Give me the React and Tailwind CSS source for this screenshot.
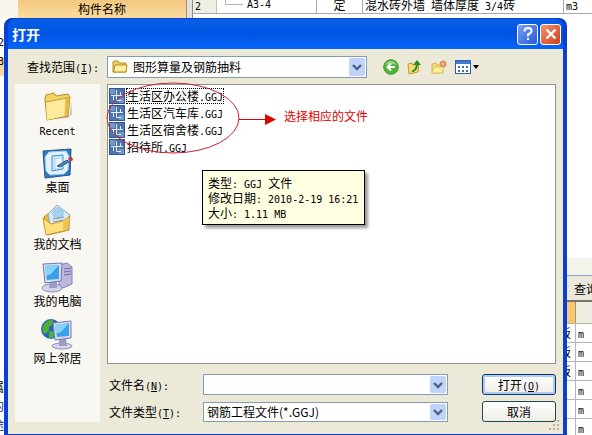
import { useState } from "react";

const places = [
  { name: "Recent", icon: RecentIcon },
  { name: "桌面", icon: DesktopIcon },
  { name: "我的文档", icon: DocumentsIcon },
  { name: "我的电脑", icon: ComputerIcon },
  { name: "网上邻居", icon: NetworkIcon },
];

const files = ["生活区办公楼.GGJ", "生活区汽车库.GGJ", "生活区宿舍楼.GGJ", "招待所.GGJ"];

const units = [
  { part: "板", unit: "m" },
  { part: "板", unit: "m" },
  { part: "板", unit: "m" },
  { part: "", unit: "m" },
  { part: "", unit: "m" },
  { part: "", unit: "m" },
];

// Latin runs are half as wide as the Chinese characters around them.
function Mixed({ text }) {
  return text.split(/([\x20-\x7e]+)/).map((run, index) =>
    index % 2 ? (
      <span key={index} className="whitespace-pre font-['DejaVu_Sans_Mono',monospace] text-[10px] leading-none">
        {run}
      </span>
    ) : (
      run
    ),
  );
}

function Accelerator({ letter }) {
  return (
    <span className="font-['DejaVu_Sans_Mono',monospace] text-[10px] leading-none">
      (<u>{letter}</u>)
    </span>
  );
}

function RecentIcon() {
  return (
    <svg viewBox="0 0 32 32" className="size-8" aria-hidden="true">
      <path d="M8 29 L28 25 L29 10 L30 24 L26 28 Z" fill="#8f8b78" opacity="0.5" />
      <path d="M3 9 L4 5 L12 3 L14 6 L26 4 L28 7 L26 26 L5 30 Z" fill="#f4d264" stroke="#b58b25" />
      <path d="M4 12 L23 8 L22 26 L5 30 Z" fill="#fdeb9b" />
      <path d="M3 12 L23 8.500 L28 7" fill="none" stroke="#c79c31" />
      <path d="M24 9 L28 7 L26 25 L23 26 Z" fill="#e3b743" />
    </svg>
  );
}

function DesktopIcon() {
  return (
    <svg viewBox="0 0 32 32" className="size-8" aria-hidden="true">
      <path d="M1 4 L29 2 L28 28 L3 31 Z" fill="#2f78bd" stroke="#1c5795" />
      <path d="M7 5 L24 4 L27 9 L26 23 L22 27 L8 28 L4 24 L3 10 Z" fill="#e3f2fc" stroke="#9cccee" />
      <path d="M10 9 L21 8 L21 22 L10 24 Z" fill="#c9e7fa" stroke="#468fc8" />
      <path d="M13 12 L20 11 L20 21 L13 22 Z" fill="#eef9ff" stroke="#b5d8ee" />
      <path d="M15 19 L25 13 L27 15 L18 20 Z" fill="#4f86b4" stroke="#2c5f90" />
      <path d="M26 11 L30 10 L31 13 L28 15 Z" fill="#c23a32" />
    </svg>
  );
}

function DocumentsIcon() {
  return (
    <svg viewBox="0 0 32 32" className="size-8" aria-hidden="true">
      <path d="M3 13 L8 9 L28 10 L28 26 L7 31 Z" fill="#e8b93c" stroke="#b58b25" />
      <path d="M7 10 L16 1 L29 11 L22 23 L10 24 Z" fill="#d9eaf5" stroke="#8fa8b8" />
      <circle cx="17" cy="9" r="6" fill="#a6d1ec" />
      <path d="M12 15 L23 13 M12 18 L22 16" stroke="#7d9db4" />
      <path d="M2 14 L10 20 L22 17 L29 12 L27 26 L5 31 Z" fill="#fbe07c" stroke="#c79c31" />
      <path d="M22 18 L28 14 L26 25 L22 27 Z" fill="#edc451" />
    </svg>
  );
}

function ComputerIcon() {
  return (
    <svg viewBox="0 0 32 32" className="size-8" aria-hidden="true">
      <path d="M18 4 L26 2 L31 6 L31 23 L22 27 L18 24 Z" fill="#b9b7dc" stroke="#8482b4" />
      <path d="M23 8 L30 7 M23 11 L30 10 M23 14 L30 13" stroke="#6d6aa5" />
      <ellipse cx="11" cy="27" rx="10" ry="4" fill="#d3d4e8" stroke="#8d8fb8" />
      <path d="M9 19 L16 19 L16 27 L8 27 Z" fill="#9c9dc6" />
      <path d="M2 3 L21 2 L20 20 L4 22 Z" fill="#d7dcef" stroke="#7579a9" />
      <path d="M4 5 L18 4 L18 18 L6 19 Z" fill="#3aa0ea" />
      <path d="M4 5 L18 4 L10 13 L5 15 Z" fill="#87d3fa" />
    </svg>
  );
}

function NetworkIcon() {
  return (
    <svg viewBox="0 0 32 32" className="size-8" aria-hidden="true">
      <circle cx="10" cy="11" r="10" fill="#2465c4" />
      <path d="M2 8 Q5 1 12 2 Q13 7 8 9 Q9 14 4 16 Q0 13 2 8 Z M8 13 L14 14 L12 20 L8 20 Z" fill="#4dae39" />
      <ellipse cx="21" cy="28" rx="10" ry="3" fill="#d3d4e8" stroke="#8d8fb8" />
      <path d="M18 20 L25 20 L26 28 L18 28 Z" fill="#9c9dc6" />
      <path d="M12 5 L30 3 L30 20 L14 22 Z" fill="#d7dcef" stroke="#7579a9" />
      <path d="M14 7 L28 5 L28 18 L16 19 Z" fill="#3aa0ea" />
      <path d="M14 7 L28 5 L20 14 L15 16 Z" fill="#87d3fa" />
    </svg>
  );
}

function SmallFolder() {
  return (
    <svg viewBox="0 0 16 16" className="size-4" aria-hidden="true">
      <path d="M1 13 V3 L2 2 H6 L7 4 H14 V13 Z" fill="#f3cf5c" stroke="#b58b25" />
      <path d="M1.500 13 L3 6 H15 L14 13 Z" fill="#fff0a0" stroke="#b58b25" />
    </svg>
  );
}

function FileIcon() {
  return (
    <svg viewBox="0 0 16 16" className="size-4 shrink-0" aria-hidden="true">
      <rect width="16" height="16" fill="#34568f" />
      <rect x="1" y="1" width="14" height="14" fill="#4c74b0" />
      <path d="M1 1 H6 V6 H1 Z M10 10 H15 V15 H10 Z" fill="#7398c8" />
      <path d="M7.500 2 V12.500 H12 M2 7.500 H14 M11.500 4 V7 M4.500 8 V12" fill="none" stroke="#e3ecf8" />
    </svg>
  );
}

function Chevron() {
  return (
    <span className="pointer-events-none flex h-full w-4 items-center justify-center rounded-xs bg-[#c1d3fb]">
      <svg viewBox="0 0 10 8" className="h-2 w-2.5" aria-hidden="true">
        <path d="M1 2 L5 6 L9 2" fill="none" stroke="#4d6185" strokeWidth="2.4" />
      </svg>
    </span>
  );
}

function Toolbar() {
  return (
    <div className="flex items-center gap-2 pl-4">
      <button type="button" aria-label="后退">
        <svg viewBox="0 0 16 16" className="size-4">
          <circle cx="8" cy="8" r="7.300" fill="#4fb338" stroke="#3a9a2a" />
          <path d="M2 6 Q4 2 8 2 Q12 2 14 6 Q8 4 2 6" fill="#93d67c" />
          <path d="M12 8 H5 M8 4.500 L4.500 8 L8 11.500" fill="none" stroke="#fff" strokeWidth="2" />
        </svg>
      </button>
      <button type="button" aria-label="向上一级">
        <svg viewBox="0 0 16 16" className="size-4">
          <path d="M1 5 L5 4 L6 6 L12 5 L11 13 L2 15 Z" fill="#f6dc73" stroke="#c39c37" />
          <path d="M5 12.500 Q10 11 10 5" fill="none" stroke="#2f8b26" strokeWidth="2" />
          <path d="M6 6 L10 1 L14 6 Z" fill="#2f8b26" />
        </svg>
      </button>
      <button type="button" aria-label="新建文件夹">
        <svg viewBox="0 0 16 16" className="size-4">
          <path d="M1 14 V5 L5 4 L6 6 H12 V14 Z" fill="#f6dc73" stroke="#d9b65c" />
          <path d="M1 14 L3 8 H13 L11 14 Z" fill="#fff0a0" stroke="#e0c068" />
          <circle cx="12" cy="5" r="3.500" fill="#e39a62" />
          <path d="M12 3 V7 M10 5 H14" stroke="#c9683a" />
          <circle cx="12" cy="5" r="1" fill="#fff" />
        </svg>
      </button>
      <button type="button" aria-label="查看菜单" className="flex items-center gap-0.5">
        <svg viewBox="0 0 16 16" className="size-4">
          <rect x="0.500" y="1.500" width="15" height="13" fill="#fff" stroke="#2d62a9" />
          <rect x="1" y="2" width="14" height="3" fill="#3d7cd0" />
          <path d="M3 7 H5 V9 H3 Z M7 7 H9 V9 H7 Z M11 7 H13 V9 H11 Z M3 11 H5 V13 H3 Z M7 11 H9 V13 H7 Z M11 11 H13 V13 H11 Z" fill="#3f6fa5" />
        </svg>
        <svg viewBox="0 0 6 4" className="h-1 w-1.5">
          <path d="M0 0 H6 L3 4 Z" fill="#000" />
        </svg>
      </button>
    </div>
  );
}

function Background() {
  return (
    <div className="absolute inset-0 flex flex-col overflow-hidden bg-white" aria-hidden="true">
      <div className="flex h-[18px] shrink-0">
        <div className="w-[18px] bg-[#f7f5ec]" />
        <div className="w-[169px] border-r border-[#b98f4c] bg-linear-to-b from-[#f3c67e] to-[#fbdd9f] text-center leading-[18px]">
          构件名称
        </div>
        <div className="w-1.5 border-r border-[#8a8f94] bg-[#dfe3e6]" />
        <div className="flex h-3.5 grow border-b border-[#a9a9a9] leading-[10px]">
          <div className="w-6 border-r border-[#c5c2b4] bg-[#f0efe4] pl-0.5">
            <Mixed text="2" />
          </div>
          <div className="flex w-[100px] border-r border-[#a9a9a9] pl-2">
            <div className="mr-1 h-[5px] w-[18px] border-b border-l border-[#b5b5b5]" />
            <Mixed text="A3-4" />
          </div>
          <div className="w-[46px] border-r border-[#a9a9a9] text-center">定</div>
          <div className="w-[201px] border-r border-[#a9a9a9] pl-0.5 whitespace-nowrap">
            <Mixed text="混水砖外墙 墙体厚度 3/4砖" />
          </div>
          <div className="pl-0.5">
            <Mixed text="m3" />
          </div>
        </div>
      </div>
      <div className="flex grow justify-between">
        <div className="flex w-1 flex-col pt-5 pb-1 leading-[19px]">
          <div className="flex h-[19px] justify-end">
            <Mixed text="2" />
          </div>
          <div className="flex h-[19px] justify-end bg-[#f8d9a4]">
            <Mixed text="3" />
          </div>
          <div className="mt-auto flex h-[19px] justify-end">属</div>
          <div className="flex h-[19px] justify-end text-[#1a1a8c]">的</div>
          <div className="flex h-[19px] justify-end text-[#1a1a8c]">途</div>
        </div>
        <div className="mt-60 w-[27px] border-l border-[#aeb4bd]">
          <div className="h-[18px] border-b border-[#86a0cc] bg-[#f4f3ea]" />
          <div className="h-[26px] overflow-hidden border-b-2 border-[#77746a] bg-[#ece9dc] pl-2 leading-[26px] whitespace-nowrap">
            查询
          </div>
          <div className="flex h-[22px] border-b border-[#b5b2a4]">
            <div className="w-2.5 border-r border-[#b98f4c] bg-[#f7c777]" />
            <div className="grow bg-[#eeecdf]" />
          </div>
          {units.map((row, index) => (
            <div key={index} className="flex h-[19px] border-b border-[#b5b5b5] leading-[18px]">
              <div className="flex w-2.5 justify-end overflow-hidden border-r border-[#b5b5b5] pr-1">{row.part}</div>
              <div className="pl-0.5">
                <Mixed text={row.unit} />
              </div>
            </div>
          ))}
        </div>
      </div>
    </div>
  );
}

function TitleBar() {
  return (
    <header className="flex h-[30px] items-center rounded-t-lg bg-linear-to-b from-[#0a5fe6] via-[#0054e3] to-[#0566fb] pr-0.5 pl-1">
      <h1 className="grow text-[14px] leading-5 font-bold text-white">打开</h1>
      <div className="flex gap-0.5">
        <button
          type="button"
          aria-label="帮助"
          className="flex size-[21px] items-center justify-center rounded-[3px] border border-white bg-linear-to-br from-[#7ba0f4] to-[#2358d8]"
        >
          <svg viewBox="0 0 16 16" className="size-4">
            <path d="M4.500 5.500 Q4.500 2 8 2 Q11.500 2 11.500 5 Q11.500 7 8 8.500 V10.500" fill="none" stroke="#fff" strokeWidth="2" />
            <rect x="7" y="12" width="2" height="2" fill="#fff" />
          </svg>
        </button>
        <button
          type="button"
          aria-label="关闭"
          className="flex size-[21px] items-center justify-center rounded-[3px] border border-white bg-linear-to-br from-[#f0906f] to-[#cf3d13]"
        >
          <svg viewBox="0 0 16 16" className="size-4">
            <path d="M3.500 3.500 L12.500 12.500 M12.500 3.500 L3.500 12.500" stroke="#fff" strokeWidth="2.400" />
          </svg>
        </button>
      </div>
    </header>
  );
}

function FileList({ selected, onSelect }) {
  return (
    <section className="relative grow border border-[#8d9296] bg-white px-px py-0.5">
      <ul>
        {files.map((file) => (
          <li key={file}>
            <button type="button" onClick={() => onSelect(file)} className="flex h-[17px] items-center gap-px">
              <FileIcon />
              <span
                className={
                  file === selected
                    ? "border border-dotted border-black leading-[14px]"
                    : "border border-transparent leading-[14px]"
                }
              >
                <Mixed text={file} />
              </span>
            </button>
          </li>
        ))}
      </ul>

      {/* annotation over the list */}
      <div className="pointer-events-none absolute -top-1 -left-0.5 flex items-center text-[#e00000]">
        <svg viewBox="0 0 172 74" className="h-[74px] w-[172px]" aria-hidden="true">
          <ellipse cx="67" cy="37" rx="66" ry="35" fill="none" stroke="#cc2030" />
          <path d="M133 38.500 H162" stroke="#e00000" />
          <path d="M159 33 L170 38.500 L159 44 Z" fill="#e00000" />
        </svg>
        <span className="pb-1 pl-1.5 whitespace-nowrap">选择相应的文件</span>
      </div>

      <div
        role="tooltip"
        className="absolute top-[85px] left-[94px] border border-black bg-[#ffffe1] py-1 pr-1.5 pl-[5px] leading-[15px] whitespace-nowrap shadow-[3px_3px_3px_rgba(0,0,0,0.4)]"
      >
        <p>
          <Mixed text="类型: GGJ 文件" />
        </p>
        <p>
          <Mixed text="修改日期: 2010-2-19 16:21" />
        </p>
        <p>
          <Mixed text="大小: 1.11 MB" />
        </p>
      </div>
    </section>
  );
}

function App() {
  const [selected, setSelected] = useState(files[0]);
  const [fileName, setFileName] = useState("");

  return (
    <div className="relative flex min-h-screen overflow-hidden font-['Noto_Sans_CJK_SC',sans-serif] text-[12px] text-black">
      <Background />
      <main className="relative mt-[18px] mr-[25px] ml-1 flex grow flex-col rounded-t-lg border-x-4 border-t border-b border-[#0a3fd0] bg-[#0a3fd0]">
        <TitleBar />
        <div className="flex grow flex-col bg-[#ece9d8] pt-[7px] pr-[7px] pb-3 pl-[7px]">
          <div className="flex h-[22px] items-center">
            <label htmlFor="folder" className="w-[92px] pl-3">
              查找范围
              <Accelerator letter="I" />
              <Mixed text=":" />
            </label>
            <div className="relative h-[22px] w-[260px] border border-[#7f9db9] bg-white">
              <select id="folder" className="h-full w-full appearance-none pl-[25px] outline-none">
                <option>图形算量及钢筋抽料</option>
              </select>
              <div className="pointer-events-none absolute inset-y-0 left-1 flex items-center">
                <SmallFolder />
              </div>
              <div className="pointer-events-none absolute inset-y-px right-px">
                <Chevron />
              </div>
            </div>
            <Toolbar />
          </div>

          <div className="mt-1.5 flex grow">
            <nav className="mr-[7px] flex w-[85px] shrink-0 flex-col items-center bg-[#f8f7f2] pt-1.5">
              {places.map(({ name, icon: Icon }) => (
                <button key={name} type="button" className="flex h-[57px] flex-col items-center">
                  <Icon />
                  <span className="leading-4">
                    <Mixed text={name} />
                  </span>
                </button>
              ))}
            </nav>

            <div className="flex grow flex-col">
              <FileList selected={selected} onSelect={setSelected} />

              <div className="mt-2.5 flex">
                <div className="flex grow flex-col gap-[7px]">
                  <div className="flex h-[21px] items-center">
                    <label htmlFor="file-name" className="w-24 pl-0.5">
                      文件名
                      <Accelerator letter="N" />
                      <Mixed text=":" />
                    </label>
                    <div className="flex h-full grow border border-[#7f9db9] bg-white p-px">
                      <input
                        id="file-name"
                        value={fileName}
                        onChange={(event) => setFileName(event.target.value)}
                        className="min-w-0 grow px-0.5 outline-none"
                      />
                      <Chevron />
                    </div>
                  </div>
                  <div className="flex h-5 items-center">
                    <label htmlFor="file-type" className="w-24 pl-0.5">
                      文件类型
                      <Accelerator letter="T" />
                      <Mixed text=":" />
                    </label>
                    <div className="relative h-full grow border border-[#7f9db9] bg-white">
                      <select id="file-type" className="h-full w-full appearance-none pl-[3px] outline-none">
                        <option>钢筋工程文件(*.GGJ)</option>
                      </select>
                      <div className="pointer-events-none absolute inset-y-px right-px">
                        <Chevron />
                      </div>
                    </div>
                  </div>
                </div>
                <div className="ml-[34px] flex w-[74px] flex-col gap-1.5">
                  <button
                    type="button"
                    className="h-[21px] rounded-[3px] border border-[#003c74] bg-linear-to-b from-white to-[#eeede6] leading-[17px] inset-ring-2 inset-ring-[#b4c9f0]"
                  >
                    打开
                    <Accelerator letter="O" />
                  </button>
                  <button
                    type="button"
                    className="h-[21px] rounded-[3px] border border-[#1f4a4f] bg-linear-to-b from-white to-[#eeede6] leading-[17px]"
                  >
                    取消
                  </button>
                </div>
              </div>
            </div>
          </div>
        </div>
        <svg viewBox="0 0 12 12" className="absolute right-0.5 bottom-0.5 size-3" aria-hidden="true">
          <path d="M8 0 H10 V2 H8 Z M8 4 H10 V6 H8 Z M8 8 H10 V10 H8 Z M4 4 H6 V6 H4 Z M4 8 H6 V10 H4 Z M0 8 H2 V10 H0 Z" fill="#b8b4a2" />
        </svg>
      </main>
    </div>
  );
}

export default App;
